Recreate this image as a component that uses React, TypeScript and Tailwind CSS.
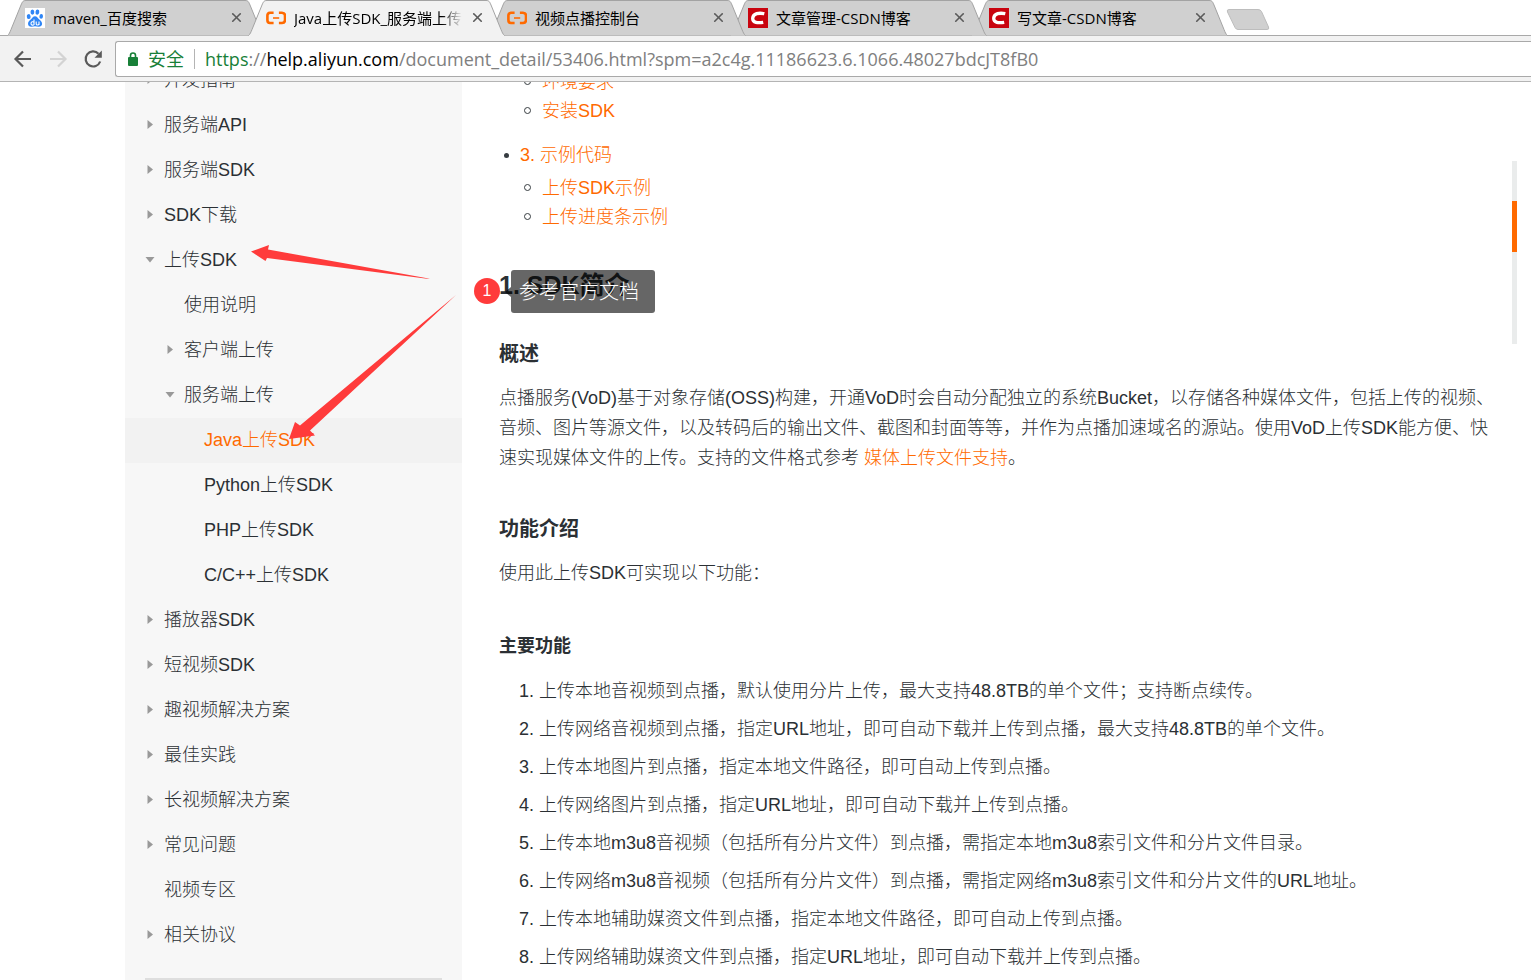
import React from 'react';
import { X } from 'lucide-react';

type IconKind = 'baidu' | 'aliyun' | 'csdn';

const tabs: { title: string; icon: IconKind; active?: boolean; layer: string }[] = [
  { title: 'maven_百度搜索', icon: 'baidu', layer: 'z-10' },
  { title: 'Java上传SDK_服务端上传SDK', icon: 'aliyun', active: true, layer: 'z-20' },
  { title: '视频点播控制台', icon: 'aliyun', layer: 'z-10' },
  { title: '文章管理-CSDN博客', icon: 'csdn', layer: 'z-5' },
  { title: '写文章-CSDN博客', icon: 'csdn', layer: 'z-0' },
];

type Arrow = 'right' | 'down' | 'none';

const menu: { label: string; level: 0 | 1 | 2; arrow: Arrow; active?: boolean }[] = [
  { label: '开发指南', level: 0, arrow: 'right' },
  { label: '服务端API', level: 0, arrow: 'right' },
  { label: '服务端SDK', level: 0, arrow: 'right' },
  { label: 'SDK下载', level: 0, arrow: 'right' },
  { label: '上传SDK', level: 0, arrow: 'down' },
  { label: '使用说明', level: 1, arrow: 'none' },
  { label: '客户端上传', level: 1, arrow: 'right' },
  { label: '服务端上传', level: 1, arrow: 'down' },
  { label: 'Java上传SDK', level: 2, arrow: 'none', active: true },
  { label: 'Python上传SDK', level: 2, arrow: 'none' },
  { label: 'PHP上传SDK', level: 2, arrow: 'none' },
  { label: 'C/C++上传SDK', level: 2, arrow: 'none' },
  { label: '播放器SDK', level: 0, arrow: 'right' },
  { label: '短视频SDK', level: 0, arrow: 'right' },
  { label: '趣视频解决方案', level: 0, arrow: 'right' },
  { label: '最佳实践', level: 0, arrow: 'right' },
  { label: '长视频解决方案', level: 0, arrow: 'right' },
  { label: '常见问题', level: 0, arrow: 'right' },
  { label: '视频专区', level: 0, arrow: 'none' },
  { label: '相关协议', level: 0, arrow: 'right' },
];

const indents = ['pl-5', 'pl-10', 'pl-15'];

const features = [
  '上传本地音视频到点播，默认使用分片上传，最大支持48.8TB的单个文件；支持断点续传。',
  '上传网络音视频到点播，指定URL地址，即可自动下载并上传到点播，最大支持48.8TB的单个文件。',
  '上传本地图片到点播，指定本地文件路径，即可自动上传到点播。',
  '上传网络图片到点播，指定URL地址，即可自动下载并上传到点播。',
  '上传本地m3u8音视频（包括所有分片文件）到点播，需指定本地m3u8索引文件和分片文件目录。',
  '上传网络m3u8音视频（包括所有分片文件）到点播，需指定网络m3u8索引文件和分片文件的URL地址。',
  '上传本地辅助媒资文件到点播，指定本地文件路径，即可自动上传到点播。',
  '上传网络辅助媒资文件到点播，指定URL地址，即可自动下载并上传到点播。',
];

function TabIcon({ kind }: { kind: IconKind }) {
  if (kind === 'baidu') {
    return (
      <svg viewBox="0 0 20 20" className="size-5 shrink-0" aria-hidden="true">
        <rect width="20" height="20" fill="#fff" />
        <g fill="#2f86f6">
          <ellipse cx="3.7" cy="8.6" rx="1.9" ry="2.5" transform="rotate(-10 3.7 8.6)" />
          <ellipse cx="7.4" cy="4.1" rx="1.9" ry="2.7" />
          <ellipse cx="12.4" cy="4.1" rx="1.9" ry="2.7" transform="rotate(8 12.4 4.1)" />
          <ellipse cx="16.2" cy="8.4" rx="1.8" ry="2.4" transform="rotate(8 16.2 8.4)" />
          <path d="M10 8.200c-2 0-2.700 1.600-3.800 2.900C4.800 12.500 3 13.500 3 15.700c0 2 1.500 3 3.300 3 1.400 0 2.400-.4 3.700-.4s2.300.4 3.700.4c1.800 0 3.400-1 3.400-3 0-2.200-1.900-3.200-3.300-4.600C12.700 9.800 12 8.200 10 8.200z" />
        </g>
        <g fill="none" stroke="#fff" strokeWidth="1.1">
          <path d="M9 11.500v5.500M9 14.300c-.8-1-3-.7-3 1.200s2.200 2 3 1" />
          <path d="M11.200 13.500v2.400c0 1.400 2.600 1.400 2.800 0v-2.400 3.600" />
        </g>
      </svg>
    );
  }
  if (kind === 'aliyun') {
    return (
      <svg viewBox="0 0 20 20" className="size-5 shrink-0" aria-hidden="true">
        <g fill="none" stroke="#ff6a00" strokeWidth="2.6">
          <path d="M7.600 4.800H4Q1.400 5 1.400 7.600v4.400Q1.400 15 4 15h3.600" />
          <path d="M12.900 4.800h3Q19 5 19 7.600v4.400Q19 15 16 15h-3.100" />
          <path d="M7 10h6.200" strokeWidth="1.6" />
        </g>
      </svg>
    );
  }
  return (
    <svg viewBox="0 0 20 20" className="size-5 shrink-0" aria-hidden="true">
      <rect width="20" height="20" fill="#c9040f" />
      <path
        d="M16.300 5.700C11 4.600 5 5.300 4.700 10.200c-.2 4.700 5.300 5 10.500 4.100"
        fill="none"
        stroke="#fff"
        strokeWidth="3.3"
      />
    </svg>
  );
}

function Caret({ arrow }: { arrow: Arrow }) {
  return (
    <svg viewBox="0 0 10 10" className="size-[10px] shrink-0" fill="#999" aria-hidden="true">
      {arrow === 'right' && <path d="M2.500 0 8 4.500 2.500 9z" />}
      {arrow === 'down' && <path d="M0.500 2h9L5 7.500z" />}
    </svg>
  );
}

function BrowserChrome() {
  return (
    <header className="relative z-10 shrink-0 font-['Open_Sans','Noto_Sans_CJK_SC',sans-serif]">
      <div className="flex h-9 border-b border-[#a9a9a9] pl-[7px]">
        {tabs.map((tab, i) => (
          <div
            key={i}
            className={`relative -mr-4 flex h-9 w-[257px] shrink-0 items-center pr-5 pb-px pl-[18px] ${tab.layer}`}
          >
            <svg
              viewBox="0 0 257 36"
              preserveAspectRatio="none"
              className="absolute inset-0 size-full"
              aria-hidden="true"
            >
              <path
                d="M0.500 35.500C2 34.500 3 32 4 29.500L14 5C15.500 1.500 16 0.500 19 0.500H238C241 0.500 241.500 1.500 243 5L253 29.500C254 32 255 34.500 256.500 35.500"
                fill={tab.active ? '#f2f2f2' : '#d0d0d0'}
                stroke="#a3a3a3"
              />
              {tab.active && <path d="M1 35.500H256" stroke="#f2f2f2" />}
            </svg>
            <button className="relative flex min-w-0 flex-1 items-center gap-2 text-left text-[15px] leading-5 text-black">
              <TabIcon kind={tab.icon} />
              <span
                className={`min-w-0 flex-1 overflow-hidden whitespace-nowrap ${
                  tab.active ? '[mask-image:linear-gradient(to_right,#000_88%,transparent)]' : ''
                }`}
              >
                {tab.title}
              </span>
            </button>
            <button aria-label="关闭标签页" className="relative ml-2 shrink-0 text-[#5a5a5a]">
              <X className="size-[15px]" strokeWidth={2.6} />
            </button>
          </div>
        ))}
        <button aria-label="新标签页" className="mt-[8px] ml-[14px] h-[23px]">
          <svg viewBox="0 0 44 23" className="h-[23px] w-11" aria-hidden="true">
            <path
              d="M3 1.500H32q2.500 0 3.500 2l7 15.500q1 2.500-1.500 2.500H12q-2 0-3-2L1.500 4Q.5 1.500 3 1.500z"
              fill="#d0d0d0"
              stroke="#bdbdbd"
            />
          </svg>
        </button>
      </div>
      <div className="flex h-[46px] items-center border-b border-[#b4b4b4] bg-[#f2f2f2] pl-[13px]">
        <button aria-label="后退" className="mr-[15px]">
          <svg viewBox="0 0 20 20" className="size-5" fill="none" stroke="#5a5a5a" strokeWidth="2.2">
            <path d="M18 10H3M10 2.500 2.500 10l7.500 7.500" />
          </svg>
        </button>
        <button aria-label="前进" className="mr-[15px]" disabled>
          <svg viewBox="0 0 20 20" className="size-5" fill="none" stroke="#d3d3d3" strokeWidth="2.2">
            <path d="M2 10h15M10 2.500l7.500 7.500-7.500 7.500" />
          </svg>
        </button>
        <button aria-label="重新加载" className="mr-3">
          <svg viewBox="0 0 20 20" className="size-5" fill="none" stroke="#5a5a5a" strokeWidth="2.2">
            <path d="M17.200 12.500A7.500 7.500 0 1 1 15.500 4.700" />
            <path d="M18.800 1.500v7.300h-7.300z" fill="#5a5a5a" stroke="none" />
          </svg>
        </button>
        <div className="flex h-9 flex-1 items-center overflow-hidden rounded-l-[3px] border border-r-0 border-[#a9a9a9] bg-white pl-3 whitespace-nowrap">
          <svg viewBox="0 0 10 14" className="h-[14px] w-[10px]" aria-hidden="true">
            <path d="M2.500 6V3.500a2.500 2.500 0 0 1 5 0V6" fill="none" stroke="#188038" strokeWidth="1.6" />
            <rect y="5" width="10" height="9" rx="1" fill="#188038" />
          </svg>
          <span className="ml-[10px] text-lg leading-6 text-[#188038]">安全</span>
          <span className="mx-[10px] h-5 w-px bg-[#b4b4b4]" />
          <span className="text-lg leading-6 text-[#808080]">
            <span className="text-[#188038]">https</span>://<span className="text-black">help.aliyun.com</span>
            /document_detail/53406.html?spm=a2c4g.11186623.6.1066.48027bdcJT8fB0
          </span>
        </div>
      </div>
    </header>
  );
}

function Sidebar() {
  return (
    <nav className="-mt-6 w-[337px] shrink-0 bg-[#f7f7f7]">
      <ul>
        {menu.map((item) => (
          <li key={item.label}>
            <a
              href="#"
              className={`flex h-[45px] items-center gap-[9px] pb-px ${indents[item.level]} ${
                item.active ? 'bg-[#f2f2f2] text-[#ff6a00]' : 'text-[#2b3034]'
              }`}
            >
              <Caret arrow={item.arrow} />
              {item.label}
            </a>
          </li>
        ))}
      </ul>
      <div className="mx-5 mt-5 h-[60px] border-t-2 border-[#dedede]" />
    </nav>
  );
}

function SubList({ items }: { items: string[] }) {
  return (
    <ul className="flex flex-col pl-5">
      {items.map((text) => (
        <li key={text} className="flex h-[29px] items-center gap-[11px]">
          <span className="size-[7px] rounded-full border border-[#373d41]" />
          <a href="#" className="text-[#ff6a00]">
            {text}
          </a>
        </li>
      ))}
    </ul>
  );
}

function Article() {
  return (
    <main className="ml-[37px] w-[1000px] text-[#2b3034]">
      <div className="-mt-[15px] pl-[5px]">
        <SubList items={['环境要求', '安装SDK']} />
        <div className="mt-[15px] mb-[3px] flex h-[30px] items-center gap-[11px]">
          <span className="size-[5px] rounded-full bg-[#373d41]" />
          <a href="#" className="text-[#ff6a00]">
            3. 示例代码
          </a>
        </div>
        <SubList items={['上传SDK示例', '上传进度条示例']} />
      </div>
      <h2 className="mt-9 text-[25px] leading-9 font-bold">1. SDK简介</h2>
      <h3 className="mt-9 text-xl leading-[30px] font-bold">概述</h3>
      <p className="mt-[14px] leading-[30px]">
        点播服务(VoD)基于对象存储(OSS)构建，开通VoD时会自动分配独立的系统Bucket，以存储各种媒体文件，包括上传的视频、音频、图片等源文件，以及转码后的输出文件、截图和封面等等，并作为点播加速域名的源站。使用VoD上传SDK能方便、快速实现媒体文件的上传。支持的文件格式参考{' '}
        <a href="#" className="text-[#ff6a00]">
          媒体上传文件支持
        </a>
        。
      </p>
      <h3 className="mt-[41px] text-xl leading-[30px] font-bold">功能介绍</h3>
      <p className="mt-[14px] leading-[30px]">使用此上传SDK可实现以下功能：</p>
      <h4 className="mt-[43px] leading-[30px] font-bold">主要功能</h4>
      <ol className="mt-[15px] list-decimal pl-10">
        {features.map((text) => (
          <li key={text} className="mb-2 leading-[30px]">
            {text}
          </li>
        ))}
      </ol>
    </main>
  );
}

function Annotations() {
  return (
    <>
      <svg
        viewBox="0 0 220 210"
        className="pointer-events-none absolute top-[158px] left-[245px] h-[210px] w-[220px]"
        fill="#ff3b3b"
        aria-hidden="true"
      >
        <path d="M6 11.500 24 5 23 9.500 185 38.700 182 38.800 22 18 20.500 21z" />
        <path d="M44 199 50 182 55 185.500 211 55 65 190.500 70 195.500z" />
      </svg>
      <div className="absolute top-[196px] left-[474px] flex size-[26px] items-center justify-center rounded-full bg-[#ff3b3b] text-base leading-none text-white">
        1
      </div>
      <div className="absolute top-[188px] left-[511px] flex h-[43px] items-center rounded-[3px] bg-black/60 pr-4 pl-2 text-xl text-white">
        <svg viewBox="0 0 6 10" className="absolute -left-[6px] h-[10px] w-[6px]" aria-hidden="true">
          <path d="M6 0v10L0 5z" fill="#000" fillOpacity="0.6" />
        </svg>
        参考官方文档
      </div>
    </>
  );
}

export default function App() {
  return (
    <div className="flex h-screen flex-col overflow-hidden bg-white">
      <BrowserChrome />
      <div className="relative flex min-h-0 flex-1 items-start overflow-hidden pl-[125px] font-['Liberation_Sans','Noto_Sans_CJK_SC',sans-serif] text-lg font-light">
        <Sidebar />
        <Article />
        <div className="absolute top-[79px] right-[14px] h-[183px] w-[5px] bg-[#eaecec] pt-10">
          <div className="h-[51px] bg-[#ff6a00]" />
        </div>
        <Annotations />
      </div>
    </div>
  );
}
